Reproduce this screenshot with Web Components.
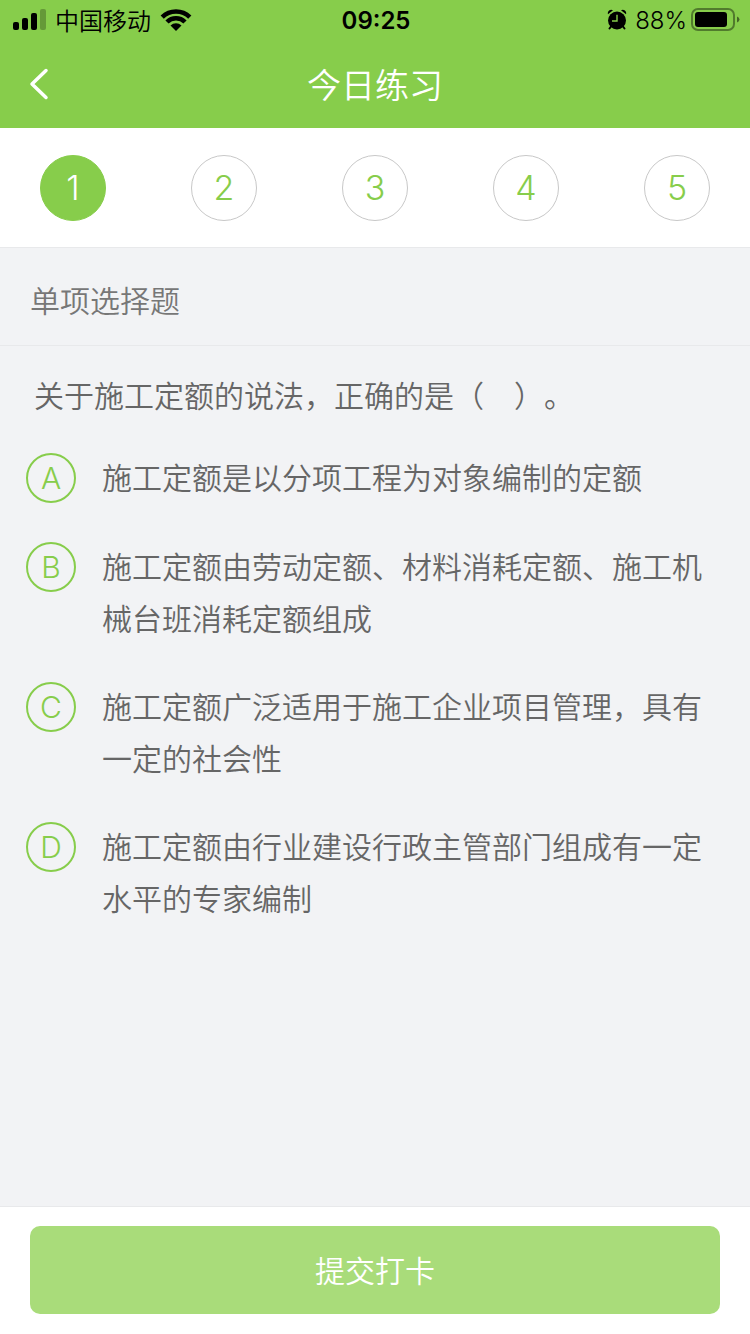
<!DOCTYPE html>
<html lang="zh-CN">
<head>
<meta charset="UTF-8">
<meta name="viewport" content="width=device-width, initial-scale=1.0">
<title>今日练习</title>
<style>
    body {
        margin: 0;
        background: #f2f3f5;
        color: #666;
        font-family: "Noto Sans CJK SC", sans-serif;
        font-weight: 350;
        --green: #87cd4b;
        --line: #e8e9eb;
        --latin: Inter, "Liberation Sans", sans-serif;
    }
</style>
</head>
<body>
<practice-page>
    <status-bar slot="header" carrier="中国移动" time="09:25" battery="88%"></status-bar>
    <nav-header slot="header">今日练习</nav-header>
    <question-tabs slot="header" total="5" current="1"></question-tabs>
    <question-type>单项选择题</question-type>
    <question-card>
        <span slot="title">关于施工定额的说法，正确的是（　）。</span>
        <answer-option value="A">施工定额是以分项工程为对象编制的定额</answer-option>
        <answer-option value="B">施工定额由劳动定额、材料消耗定额、施工机械台班消耗定额组成</answer-option>
        <answer-option value="C">施工定额广泛适用于施工企业项目管理，具有一定的社会性</answer-option>
        <answer-option value="D">施工定额由行业建设行政主管部门组成有一定水平的专家编制</answer-option>
    </question-card>
    <submit-bar slot="footer">提交打卡</submit-bar>
</practice-page>

<script>
class PracticePage extends HTMLElement {
    connectedCallback() {
        this.attachShadow({ mode: 'open' });
        this.shadowRoot.innerHTML = `
            <style>
                :host {
                    display: flex;
                    flex-direction: column;
                    min-height: 100vh;
                }

                main {
                    flex: 1;
                }
            </style>

            <header><slot name="header"></slot></header>
            <main><slot></slot></main>
            <footer><slot name="footer"></slot></footer>
        `;
    }
}

class StatusBar extends HTMLElement {
    connectedCallback() {
        this.attachShadow({ mode: 'open' });
        this.shadowRoot.innerHTML = `
            <style>
                :host {
                    display: grid;
                    grid-template-columns: 1fr auto 1fr;
                    align-items: center;
                    height: 40px;
                    padding: 0 10px 0 12px;
                    background: var(--green);
                    color: #000;
                    font-size: 24px;
                    line-height: 38px;
                }

                .left, .right {
                    display: flex;
                    align-items: center;
                }

                .left {
                    gap: 9px;
                }

                .right {
                    justify-content: flex-end;
                    gap: 4px;
                }

                .time, .battery {
                    padding-top: 2px;
                    font-family: var(--latin);
                }

                .time {
                    font-weight: 600;
                }

                svg {
                    display: block;
                    flex: none;
                }

                .alarm {
                    margin-right: 4px;
                }
            </style>

            <div class="left">
                <svg width="34" height="22" viewBox="0 0 34 22">
                    <rect x="1" y="13" width="6" height="8" rx="2"></rect>
                    <rect x="10" y="9" width="6" height="12" rx="2"></rect>
                    <rect x="19" y="4" width="6" height="17" rx="2"></rect>
                    <rect x="28" y="0" width="6" height="21" rx="2" opacity="0.25"></rect>
                </svg>
                <span>${this.getAttribute('carrier')}</span>
                <svg width="32" height="24" viewBox="0 0 32 24">
                    <g fill="none" stroke="#000" stroke-width="4.500">
                        <path d="M2.200 9.200a19.500 19.500 0 0 1 27.600 0"></path>
                        <path d="M7 14a12.700 12.700 0 0 1 18 0"></path>
                    </g>
                    <path d="M10.500 17.500a8 8 0 0 1 11 0L16 23z"></path>
                </svg>
            </div>
            <div class="time">${this.getAttribute('time')}</div>
            <div class="right">
                <svg class="alarm" width="20" height="22" viewBox="0 0 20 22">
                    <circle cx="10" cy="11.500" r="9"></circle>
                    <path d="M1 5.200a3.400 3.400 0 0 1 5-4zM19 5.200a3.400 3.400 0 0 0-5-4z"></path>
                    <path d="M4 17.500L2.500 19.500M16 17.500l1.500 2" stroke="#000" stroke-width="2" stroke-linecap="round"></path>
                    <path d="M10 5.800V12H5" fill="none" stroke="#87cd4b" stroke-width="1.400"></path>
                </svg>
                <span class="battery">${this.getAttribute('battery')}</span>
                <svg width="49" height="24" viewBox="0 0 49 24">
                    <rect x="1" y="1" width="42" height="21" rx="6" fill="none" stroke="#000" stroke-width="2" opacity="0.4"></rect>
                    <rect x="4" y="4" width="32" height="15" rx="3"></rect>
                    <path d="M46 8.500q2.500 1 2.500 3t-2.500 3z" opacity="0.5"></path>
                </svg>
            </div>
        `;
    }
}

class NavHeader extends HTMLElement {
    connectedCallback() {
        this.attachShadow({ mode: 'open' });
        this.shadowRoot.innerHTML = `
            <style>
                :host {
                    display: grid;
                    grid-template-columns: 88px 1fr 88px;
                    align-items: center;
                    height: 88px;
                    background: var(--green);
                    color: #fff;
                }

                button {
                    display: flex;
                    align-items: center;
                    height: 88px;
                    padding: 0 0 0 28px;
                    border: 0;
                    background: none;
                    color: inherit;
                }

                h1 {
                    margin: 0;
                    font-size: 34px;
                    font-weight: inherit;
                    line-height: 48px;
                    text-align: center;
                }
            </style>

            <button type="button" aria-label="返回">
                <svg width="22" height="32" viewBox="0 0 22 32" fill="none" stroke="currentColor" stroke-width="3.500" stroke-linecap="round" stroke-linejoin="round">
                    <polyline points="18 2.500 4 16 18 29.500"></polyline>
                </svg>
            </button>
            <h1><slot></slot></h1>
        `;
    }
}

class QuestionTabs extends HTMLElement {
    connectedCallback() {
        const total = Number(this.getAttribute('total'));
        const current = Number(this.getAttribute('current'));
        let buttons = '';
        for (let i = 1; i <= total; i++) {
            buttons += `<button type="button"${i === current ? ' class="active" aria-current="step"' : ''}>${i}</button>`;
        }

        this.attachShadow({ mode: 'open' });
        this.shadowRoot.innerHTML = `
            <style>
                :host {
                    display: block;
                    background: #fff;
                    border-bottom: 1px solid var(--line);
                }

                nav {
                    display: flex;
                    justify-content: space-between;
                    padding: 27px 40px 26px;
                }

                button {
                    width: 66px;
                    height: 66px;
                    padding: 0;
                    border: 1px solid #c8c8c8;
                    border-radius: 50%;
                    background: #fff;
                    color: var(--green);
                    font-family: var(--latin);
                    font-size: 34px;
                    font-weight: inherit;
                    line-height: 64px;
                }

                button.active {
                    border-color: var(--green);
                    background: var(--green);
                    color: #fff;
                }
            </style>

            <nav>${buttons}</nav>
        `;
    }
}

class QuestionType extends HTMLElement {
    connectedCallback() {
        this.attachShadow({ mode: 'open' });
        this.shadowRoot.innerHTML = `
            <style>
                :host {
                    display: block;
                    padding: 29px 30px 24px;
                    border-bottom: 1px solid var(--line);
                    color: #777;
                }

                h2 {
                    margin: 0;
                    font-size: 30px;
                    font-weight: inherit;
                    line-height: 44px;
                }
            </style>

            <h2><slot></slot></h2>
        `;
    }
}

class QuestionCard extends HTMLElement {
    connectedCallback() {
        this.attachShadow({ mode: 'open' });
        this.shadowRoot.innerHTML = `
            <style>
                :host {
                    display: block;
                    padding: 22px 26px;
                    font-size: 30px;
                    line-height: 52px;
                    text-spacing-trim: space-all;
                }

                p {
                    margin: 0 8px 30px;
                }

                .options {
                    display: flex;
                    flex-direction: column;
                    gap: 36px;
                }
            </style>

            <p id="title"><slot name="title"></slot></p>
            <div class="options" role="radiogroup" aria-labelledby="title"><slot></slot></div>
        `;

        // radios live in separate shadow roots, so keep them exclusive here
        this.addEventListener('option-select', (e) => {
            this.querySelectorAll('answer-option').forEach((option) => {
                if (option !== e.target) option.clear();
            });
        });
    }
}

class AnswerOption extends HTMLElement {
    connectedCallback() {
        const value = this.getAttribute('value');
        this.attachShadow({ mode: 'open' });
        this.shadowRoot.innerHTML = `
            <style>
                :host {
                    display: block;
                }

                label {
                    display: grid;
                    grid-template-columns: 50px 1fr;
                    align-items: start;
                    column-gap: 26px;
                    cursor: pointer;
                }

                .badge {
                    display: grid;
                    place-items: center;
                    height: 50px;
                    margin-top: 3px;
                    color: var(--green);
                    font-family: var(--latin);
                    line-height: 50px;
                }

                input, .letter {
                    grid-area: 1 / 1;
                }

                input {
                    appearance: none;
                    box-sizing: border-box;
                    width: 50px;
                    height: 50px;
                    margin: 0;
                    border: 2px solid var(--green);
                    border-radius: 50%;
                }

                .letter {
                    z-index: 1;
                }

                input:checked {
                    background: var(--green);
                }

                input:checked + .letter {
                    color: #fff;
                }
            </style>

            <label>
                <span class="badge">
                    <input type="radio" name="answer" value="${value}">
                    <span class="letter">${value}</span>
                </span>
                <span><slot></slot></span>
            </label>
        `;

        this.input = this.shadowRoot.querySelector('input');
        this.input.addEventListener('change', () => {
            this.dispatchEvent(new CustomEvent('option-select', { bubbles: true }));
        });
    }

    clear() {
        this.input.checked = false;
    }
}

class SubmitBar extends HTMLElement {
    connectedCallback() {
        this.attachShadow({ mode: 'open' });
        this.shadowRoot.innerHTML = `
            <style>
                :host {
                    display: block;
                    padding: 19px 30px 20px;
                    border-top: 1px solid var(--line);
                    background: #fff;
                }

                button {
                    display: block;
                    width: 100%;
                    height: 88px;
                    padding: 0 0 2px;
                    border: 0;
                    border-radius: 10px;
                    background: #a9dc7a;
                    color: #fff;
                    font-family: inherit;
                    font-size: 30px;
                    font-weight: inherit;
                }
            </style>

            <button type="button"><slot></slot></button>
        `;
    }
}

customElements.define('practice-page', PracticePage);
customElements.define('status-bar', StatusBar);
customElements.define('nav-header', NavHeader);
customElements.define('question-tabs', QuestionTabs);
customElements.define('question-type', QuestionType);
customElements.define('question-card', QuestionCard);
customElements.define('answer-option', AnswerOption);
customElements.define('submit-bar', SubmitBar);
</script>
</body>
</html>
